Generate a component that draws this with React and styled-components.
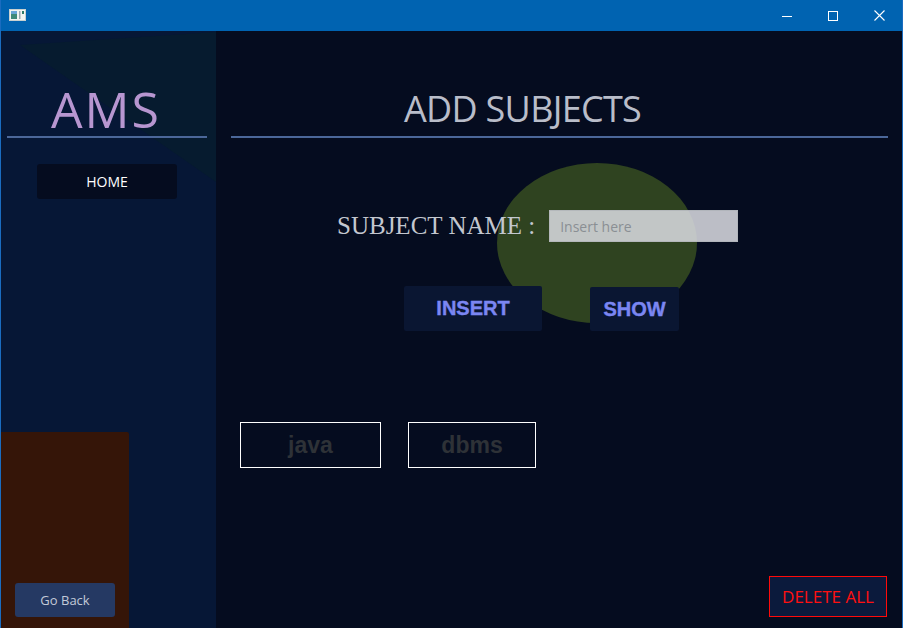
import React from "react";
import styled, { createGlobalStyle } from "styled-components";

const Global = createGlobalStyle`
  html, body { margin: 0; padding: 0; background: #050c1f; }
  body { width: 903px; height: 628px; overflow: hidden; font-family: "Open Sans", "Noto Sans", sans-serif; }
  #root { width: 903px; height: 628px; }
  * { box-sizing: border-box; }
`;

const Window = styled.div`
  width: 903px;
  height: 628px;
  display: flex;
  flex-direction: column;
  background: #050c1f;
  border-left: 1px solid #1a6cc0;
  border-right: 1px solid #1a6cc0;
  overflow: hidden;
`;

const TitleBar = styled.div`
  height: 31px;
  flex: 0 0 31px;
  background: #0063b1;
  display: flex;
  align-items: center;
  padding-left: 8px;
`;

const AppIcon = styled.svg`
  width: 17px;
  height: 12px;
  margin-top: -1px;
`;

const Controls = styled.div`
  margin-left: auto;
  display: flex;
  height: 100%;
`;

const ControlBtn = styled.div`
  width: 46px;
  height: 100%;
  display: flex;
  align-items: center;
  justify-content: center;
`;

const Body = styled.div`
  flex: 1;
  display: flex;
  min-height: 0;
`;

const Sidebar = styled.div`
  position: relative;
  width: 215px;
  flex: 0 0 215px;
  background: #061736;
  display: flex;
  flex-direction: column;
  align-items: flex-start;
  &::before {
    content: "";
    position: absolute;
    inset: 0;
    background: #061b2f;
    clip-path: polygon(19px 14px, 215px 1px, 215px 151px);
  }
`;

const Logo = styled.div`
  position: relative;
  margin: 53px 0 0 50px;
  font-size: 50px;
  line-height: 50px;
  color: #b796d0;
  font-weight: 400;
  letter-spacing: 2px;
`;

const SideRule = styled.div`
  position: relative;
  width: 200px;
  height: 2px;
  margin: 2px 0 0 6px;
  background: #4b6799;
`;

const NavButton = styled.div`
  position: relative;
  margin: 26px 0 0 36px;
  width: 140px;
  height: 35px;
  border-radius: 3px;
  background: #050c1f;
  color: #ffffff;
  font-size: 14px;
  display: flex;
  align-items: center;
  justify-content: center;
`;

const BottomPanel = styled.div`
  position: relative;
  margin-top: auto;
  width: 128px;
  height: 196px;
  background: #351508;
  border-top-right-radius: 2px;
  display: flex;
  flex-direction: column;
  justify-content: flex-end;
  padding: 0 0 11px 14px;
`;

const BackButton = styled.div`
  width: 100px;
  height: 34px;
  border-radius: 3px;
  background: #253963;
  color: #c3cad8;
  font-size: 13px;
  display: flex;
  align-items: center;
  justify-content: center;
`;

const Main = styled.div`
  position: relative;
  flex: 1;
  display: flex;
  flex-direction: column;
  background: #050c1f;
`;

const Blob = styled.div`
  position: absolute;
  left: 281px;
  top: 132px;
  width: 200px;
  height: 160px;
  border-radius: 50%;
  background: #2f4320;
`;

const Heading = styled.h1`
  position: relative;
  margin: 55px 0 0 188px;
  font-size: 36px;
  line-height: 46px;
  font-weight: 400;
  color: #b9bdc9;
  letter-spacing: -0.7px;
  white-space: nowrap;
`;

const MainRule = styled.div`
  position: relative;
  height: 2px;
  margin: 4px 14px 0 15px;
  background: #4b6799;
`;

const FormRow = styled.div`
  position: relative;
  display: flex;
  align-items: center;
  margin-top: 72px;
  padding-left: 121px;
  gap: 14px;
`;

const Label = styled.label`
  font-family: "Liberation Serif", "Times New Roman", serif;
  font-size: 25px;
  color: #c3c7cf;
  white-space: nowrap;
`;

const Input = styled.input`
  width: 189px;
  height: 32px;
  border: 1px solid rgba(170, 175, 180, 0.6);
  background: rgba(219, 220, 226, 0.86);
  padding: 0 10px;
  font-family: "Open Sans", sans-serif;
  font-size: 14px;
  color: #333;
  outline: none;
  &::placeholder { color: #8a8f94; }
`;

const ButtonRow = styled.div`
  position: relative;
  display: flex;
  align-items: flex-start;
  margin-top: 44px;
  padding-left: 188px;
  gap: 48px;
`;

const ActionButton = styled.div`
  width: ${(p) => p.$w}px;
  height: ${(p) => p.$h}px;
  margin-top: ${(p) => p.$top || 0}px;
  border-radius: 2px;
  background: #0a1632;
  color: #7b86f2;
  font-family: "Liberation Sans", Arial, sans-serif;
  font-weight: 700;
  font-size: 20px;
  -webkit-text-stroke: 0.4px #7b86f2;
  display: flex;
  align-items: center;
  justify-content: center;
`;

const SubjectRow = styled.div`
  position: relative;
  display: flex;
  margin-top: 91px;
  padding-left: 24px;
  gap: 27px;
`;

const SubjectChip = styled.div`
  width: ${(p) => p.$w}px;
  height: 46px;
  border: 1px solid #ffffff;
  color: #2e3237;
  font-family: "Liberation Sans", Arial, sans-serif;
  font-weight: 700;
  font-size: 23px;
  display: flex;
  align-items: center;
  justify-content: center;
`;

const DangerButton = styled.div`
  position: relative;
  margin-top: auto;
  align-self: flex-end;
  margin-right: 15px;
  margin-bottom: 11px;
  width: 118px;
  height: 41px;
  border: 1px solid #ff0a0a;
  background: #0b1a3c;
  color: #ff1010;
  font-size: 17px;
  display: flex;
  align-items: center;
  justify-content: center;
`;

export default function App() {
  return (
    <>
      <Global />
      <Window>
        <TitleBar>
          <AppIcon viewBox="0 0 17 12">
            <rect x="0.5" y="0.5" width="16" height="11" fill="#f2f4f2" stroke="#c8d0d0" />
            <rect x="2" y="2" width="6" height="8" fill="#3f8a7a" />
            <rect x="2" y="2" width="6" height="3" fill="#6aa6d8" />
            <rect x="10" y="2" width="1.5" height="8" fill="#9aa8b0" />
            <rect x="13" y="2" width="2" height="3" fill="#2f7a6a" />
          </AppIcon>
          <Controls>
            <ControlBtn>
              <svg width="10" height="10" viewBox="0 0 10 10">
                <line x1="0" y1="5.5" x2="10" y2="5.5" stroke="#fff" strokeWidth="1" />
              </svg>
            </ControlBtn>
            <ControlBtn>
              <svg width="10" height="10" viewBox="0 0 10 10">
                <rect x="0.5" y="0.5" width="9" height="9" fill="none" stroke="#fff" strokeWidth="1" />
              </svg>
            </ControlBtn>
            <ControlBtn>
              <svg width="11" height="11" viewBox="0 0 11 11">
                <path d="M0.5 0.5 L10.5 10.5 M10.5 0.5 L0.5 10.5" stroke="#fff" strokeWidth="1.1" />
              </svg>
            </ControlBtn>
          </Controls>
        </TitleBar>
        <Body>
          <Sidebar>
            <Logo>AMS</Logo>
            <SideRule />
            <NavButton>HOME</NavButton>
            <BottomPanel>
              <BackButton>Go Back</BackButton>
            </BottomPanel>
          </Sidebar>
          <Main>
            <Blob />
            <Heading>ADD SUBJECTS</Heading>
            <MainRule />
            <FormRow>
              <Label>SUBJECT NAME :</Label>
              <Input placeholder="Insert here" />
            </FormRow>
            <ButtonRow>
              <ActionButton $w={138} $h={45}>INSERT</ActionButton>
              <ActionButton $w={89} $h={44} $top={1}>SHOW</ActionButton>
            </ButtonRow>
            <SubjectRow>
              <SubjectChip $w={141}>java</SubjectChip>
              <SubjectChip $w={128}>dbms</SubjectChip>
            </SubjectRow>
            <DangerButton>DELETE ALL</DangerButton>
          </Main>
        </Body>
      </Window>
    </>
  );
}
